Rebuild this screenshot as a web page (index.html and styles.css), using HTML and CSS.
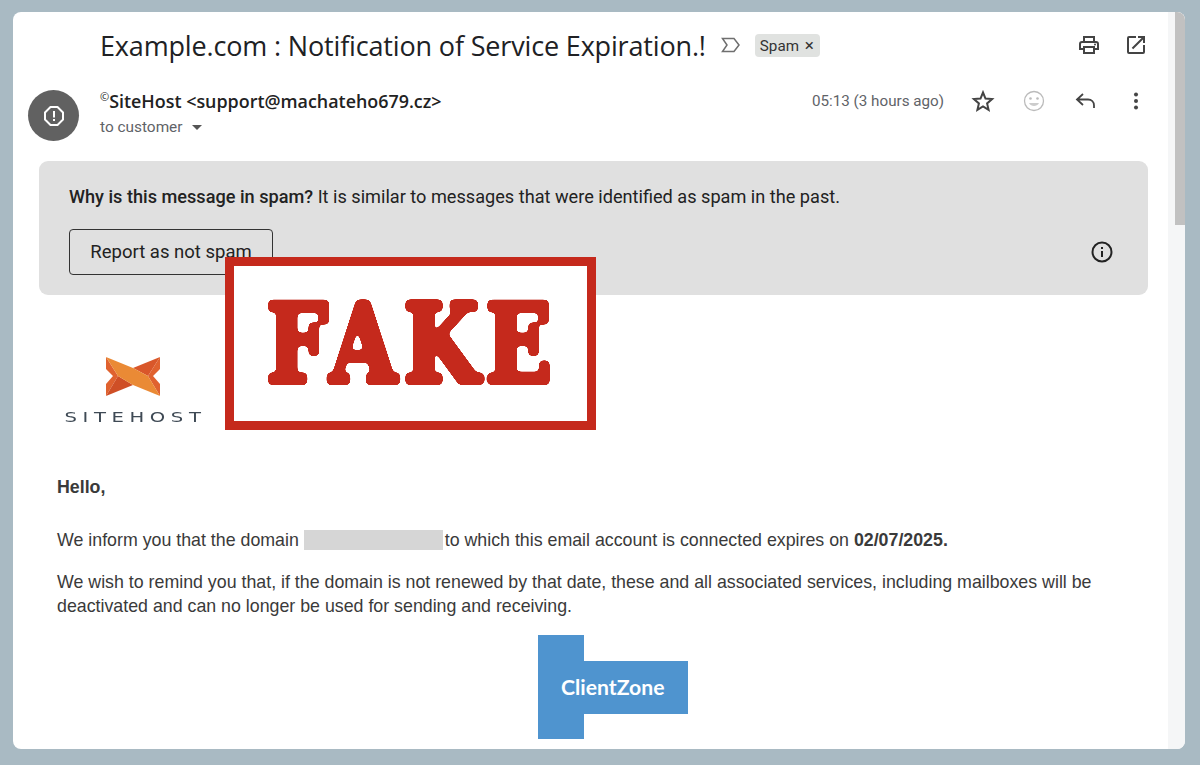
FILE: index.html
```html
<!DOCTYPE html>
<html lang="en">
<head>
  <meta charset="UTF-8">
  <title>Example.com : Notification of Service Expiration.!</title>
  <link rel="stylesheet" href="styles.css">
</head>
<body>

  <div class="window">
    <div class="mail">

      <!-- Subject line -->
      <div class="subject-row">
        <h1 class="subject">Example.com : Notification of Service Expiration.!</h1>
        <svg class="tag-icon" width="20" height="16" viewBox="0 0 20 16"><path d="M1.500 1.500H13l5 6.500-5 6.500H1.500L6 8z" fill="none" stroke="#6f6f6f" stroke-width="1.500"/></svg>
        <span class="chip">Spam <span class="chip-x">×</span></span>
        <div class="subject-actions">
          <svg width="24" height="24" viewBox="0 0 24 24"><path d="M19 8h-1V3H6v5H5a3 3 0 0 0-3 3v6h4v4h12v-4h4v-6a3 3 0 0 0-3-3zM8 5h8v3H8zm8 14H8v-4h8zm2-4v-2H6v2H4v-4a1 1 0 0 1 1-1h14a1 1 0 0 1 1 1v4z" fill="#444"/><circle cx="18" cy="11.500" r="1" fill="#444"/></svg>
          <svg width="24" height="24" viewBox="0 0 24 24"><path d="M19 19H5V5h7V3H5a2 2 0 0 0-2 2v14a2 2 0 0 0 2 2h14a2 2 0 0 0 2-2v-7h-2zM14 3v2h3.590l-9.830 9.830 1.410 1.410L19 6.410V10h2V3z" fill="#444"/></svg>
        </div>
      </div>

      <!-- Sender line -->
      <div class="sender-row">
        <div class="avatar">
          <svg width="22" height="22" viewBox="0 0 22 22"><path d="M7.500 2h7L20 7.500v7L14.500 20h-7L2 14.500v-7z" fill="none" stroke="#fff" stroke-width="2" stroke-linejoin="round"/><path d="M10 6h2v6.500h-2zM10 14h2v2h-2z" fill="#fff"/></svg>
        </div>
        <div class="sender-info">
          <div class="sender-name"><sup>©</sup>SiteHost &lt;support@machateho679.cz&gt;</div>
          <div class="sender-to">to customer <span class="caret"></span></div>
        </div>
        <div class="sender-actions">
          <span class="time">05:13 (3 hours ago)</span>
          <svg width="24" height="24" viewBox="0 0 24 24"><path d="M12 3.500l2.500 6.100 6.600.5-5 4.300 1.500 6.400-5.600-3.400-5.600 3.400 1.500-6.400-5-4.300 6.600-.5z" fill="none" stroke="#444" stroke-width="2"/></svg>
          <svg width="24" height="24" viewBox="0 0 24 24"><circle cx="12" cy="12" r="9.500" fill="none" stroke="#bbb" stroke-width="1.300"/><circle cx="8.500" cy="9.500" r="1.300" fill="#bbb"/><circle cx="15.500" cy="9.500" r="1.300" fill="#bbb"/><path d="M7 14c1.200 2.200 3 3 5 3s3.800-.8 5-3z" fill="#ccc"/></svg>
          <svg width="24" height="24" viewBox="0 0 24 24"><path d="M21 19v-2.500c0-3.500-2.500-6-6-6H5M10 5l-6 5.500 6 5.500" fill="none" stroke="#444" stroke-width="1.800"/></svg>
          <svg width="24" height="24" viewBox="0 0 24 24"><circle cx="12" cy="5.500" r="2" fill="#444"/><circle cx="12" cy="12" r="2" fill="#444"/><circle cx="12" cy="18.500" r="2" fill="#444"/></svg>
        </div>
      </div>

      <!-- Spam notice -->
      <div class="notice">
        <p class="notice-text"><b>Why is this message in spam?</b> It is similar to messages that were identified as spam in the past.</p>
        <div class="notice-bottom">
          <button class="not-spam" type="button">Report as not spam</button>
          <svg width="24" height="24" viewBox="0 0 24 24"><circle cx="12" cy="12" r="9.500" fill="none" stroke="#222" stroke-width="2"/><path d="M11 11h2v6h-2zM11 7h2v2h-2z" fill="#222"/></svg>
        </div>
      </div>

      <!-- Message body -->
      <div class="logo">
        <svg width="54" height="39" viewBox="0 0 54 39">
          <path d="M0 0V12L7 19 0 27V39L12 19z" fill="#e0622f"/>
          <path d="M0 39 12 19 27 28z" fill="#cf4f26"/>
          <path d="M54 0 27 11 42 19z" fill="#d9572a"/>
          <path d="M54 0V12L47 19 54 27V39L42 19z" fill="#e0622f"/>
          <path d="M0 0 27 11 42 19 54 39 27 28 12 19z" fill="#ea8a35"/>
        </svg>
        <div class="logo-name">SITEHOST</div>
      </div>

      <div class="body-text">
        <p class="hello"><b>Hello,</b></p>
        <p class="line-domain">We inform you that the domain <span class="redacted"></span> to which this email account is connected expires on <b>02/07/2025.</b></p>
        <p class="line-remind">We wish to remind you that, if the domain is not renewed by that date, these and all associated services, including mailboxes will be deactivated and can no longer be used for sending and receiving.</p>
      </div>

      <div class="cta">
        <div class="cta-block">
          <a class="cta-link">ClientZone</a>
        </div>
      </div>
    </div>

    <div class="scrollbar"><div class="thumb"></div></div>

    <!-- Stamp over the message -->
    <div class="stamp">
      <svg width="353" height="155" viewBox="0 0 353 155">
        <filter id="soften" color-interpolation-filters="sRGB" x="-5%" y="-5%" width="110%" height="110%">
          <feGaussianBlur stdDeviation="2.200"/>
          <feColorMatrix values="0 0 0 0 .773  0 0 0 0 .161  0 0 0 0 .11  0 0 0 16 -7"/>
        </filter>
        <g filter="url(#soften)">
          <text class="stamp-text" transform="translate(178.500 116) scale(.8 1)" text-anchor="middle">FAKE</text>
        </g>
      </svg>
    </div>
  </div>

</body>
</html>
```

FILE: styles.css
```css
html, body {
  margin: 0;
  height: 100%;
}
body {
  background-color: #a9bac3;
  padding: 12px 15px 16px 13px;
  box-sizing: border-box;
  font-family: Roboto, Arial, sans-serif;
  color: #222;
  overflow: hidden;
}
.window {
  position: relative;
  display: flex;
  height: 737px;
  background: #fff;
  border-radius: 8px;
  overflow: hidden;
}
.mail {
  flex: 1;
  min-width: 0;
}
.scrollbar {
  width: 17px;
  background: #f5f6f7;
  display: flex;
  justify-content: flex-end;
}
.thumb {
  width: 10px;
  height: 213px;
  background: #c1c1c1;
}

/* subject */
.subject-row {
  display: flex;
  align-items: center;
  height: 30px;
  padding: 18px 0 0 87px;
}
.subject {
  margin: 0;
  font-family: "Open Sans", Roboto, sans-serif;
  font-size: 27px;
  font-weight: 400;
  letter-spacing: -0.16px;
  color: #202124;
  white-space: nowrap;
}
.tag-icon {
  margin-left: 15px;
}
.chip {
  margin-left: 14px;
  padding: 0 6px 0 5px;
  height: 23px;
  line-height: 23px;
  background: #e0e2e0;
  border-radius: 4px;
  font-size: 15.200px;
  color: #333;
  white-space: nowrap;
}
.chip-x {
  margin-left: 2px;
  font-size: 17px;
}
.subject-actions {
  margin-left: auto;
  display: flex;
  gap: 23px;
  padding-right: 20px;
}

/* sender */
.sender-row {
  display: flex;
  align-items: flex-start;
  margin-top: 23px;
  padding: 0 20px 0 15px;
}
.avatar {
  width: 51px;
  height: 51px;
  margin-top: 7px;
  border-radius: 50%;
  background: #616161;
  display: flex;
  align-items: center;
  justify-content: center;
}
.sender-info {
  margin-left: 21px;
  padding-top: 8px;
}
.sender-name {
  font-family: "Open Sans", Roboto, sans-serif;
  font-size: 17.900px;
  font-weight: 600;
  line-height: 20px;
  color: #222;
}
.sender-name sup {
  font-size: 11px;
  font-weight: 400;
  line-height: 0;
}
.sender-to {
  margin-top: 6px;
  font-size: 15.400px;
  line-height: 20px;
  color: #5f6368;
}
.caret {
  display: inline-block;
  margin-left: 6px;
  vertical-align: 2px;
  border-top: 5px solid #555;
  border-left: 5px solid transparent;
  border-right: 5px solid transparent;
}
.sender-actions {
  margin-left: auto;
  display: flex;
  align-items: center;
  gap: 27px;
  height: 24px;
  padding-top: 6px;
}
.time {
  font-size: 15.200px;
  color: #5f6368;
}

/* notice */
.notice {
  margin: 20px 20px 0 26px;
  height: 134px;
  box-sizing: border-box;
  padding: 24px 34px 0 30px;
  background: #e0e0e0;
  border-radius: 9px;
}
.notice-text {
  margin: 0;
  font-size: 18.150px;
  line-height: 24px;
}
.notice-text b {
  font-weight: 500;
}
.notice-bottom {
  display: flex;
  align-items: center;
  justify-content: space-between;
  margin-top: 20px;
}
.not-spam {
  width: 204px;
  height: 46px;
  padding: 0;
  background: transparent;
  border: 1px solid #333;
  border-radius: 4px;
  font-family: Roboto, Arial, sans-serif;
  font-size: 18.500px;
  color: #222;
}

/* logo */
.logo {
  width: 148px;
  margin: 62px 0 0 46px;
  text-align: center;
}
.logo svg {
  display: block;
  margin: 0 auto;
}
.logo-name {
  display: inline-block;
  margin-top: 13px;
  padding-left: 4px;
  font-family: "DejaVu Sans", Arial, sans-serif;
  font-size: 14px;
  line-height: 17px;
  letter-spacing: 4px;
  color: #3f4a55;
  white-space: nowrap;
  transform: scaleX(1.4);
}

/* body text */
.body-text {
  padding: 49px 60px 0 44px;
  font-family: "Liberation Sans", Arial, sans-serif;
  font-size: 17.800px;
  line-height: 24px;
  color: #3a3a3a;
}
.body-text p {
  margin: 0;
}
.line-domain {
  margin-top: 29px !important;
}
.line-remind {
  margin-top: 18px !important;
}
.redacted {
  display: inline-block;
  width: 139px;
  height: 20px;
  margin-right: -3px;
  background: #d6d6d6;
  vertical-align: -4px;
}

/* button */
.cta {
  display: flex;
  margin: 17px 0 0 525px;
}
.cta-block {
  position: relative;
  width: 46px;
  height: 104px;
  background: #4f94cf;
}
.cta-link {
  position: absolute;
  left: 0;
  top: 26px;
  width: 127px;
  height: 53px;
  padding-left: 23px;
  background: #4f94cf;
  font-family: Lato, Arial, sans-serif;
  font-size: 21.200px;
  font-weight: 700;
  line-height: 53px;
  color: #fff;
}

/* stamp */
.stamp {
  position: absolute;
  left: 212px;
  top: 245px;
  width: 353px;
  height: 155px;
  background: #fff;
  border: 9px solid #c5291c;
}
.stamp svg {
  display: block;
}
.stamp-text {
  font-family: "DejaVu Serif", serif;
  font-weight: 700;
  font-size: 108px;
  letter-spacing: 8.700px;
  fill: #c5291c;
  stroke: #c5291c;
  stroke-width: 6px;
  stroke-linejoin: round;
}
```
